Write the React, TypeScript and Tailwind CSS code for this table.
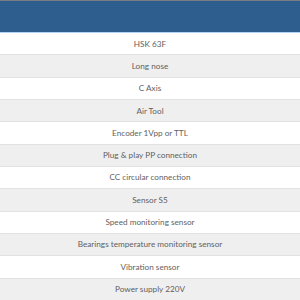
const rows = [
  "HSK 63F",
  "Long nose",
  "C Axis",
  "Air Tool",
  "Encoder 1Vpp or TTL",
  "Plug & play PP connection",
  "CC circular connection",
  "Sensor S5",
  "Speed monitoring sensor",
  "Bearings temperature monitoring sensor",
  "Vibration sensor",
  "Power supply 220V",
];

export default function App() {
  return (
    <div className="w-[300px] h-[300px] overflow-hidden bg-white font-['Lato',sans-serif]">
      <div className="h-[33px] bg-[#2d5e8e] border-t border-t-[#7a7f85] border-b border-b-[#b3d4f0]" />
      {rows.map((r, i) => (
        <div
          key={i}
          className={
            "h-[22.33px] flex items-center justify-center text-[8.2px] text-[#5f5f5f] border-b border-[#e2e2e2] " +
            (i % 2 === 0 ? "bg-white" : "bg-[#efefef]")
          }
        >
          {r}
        </div>
      ))}
    </div>
  );
}
